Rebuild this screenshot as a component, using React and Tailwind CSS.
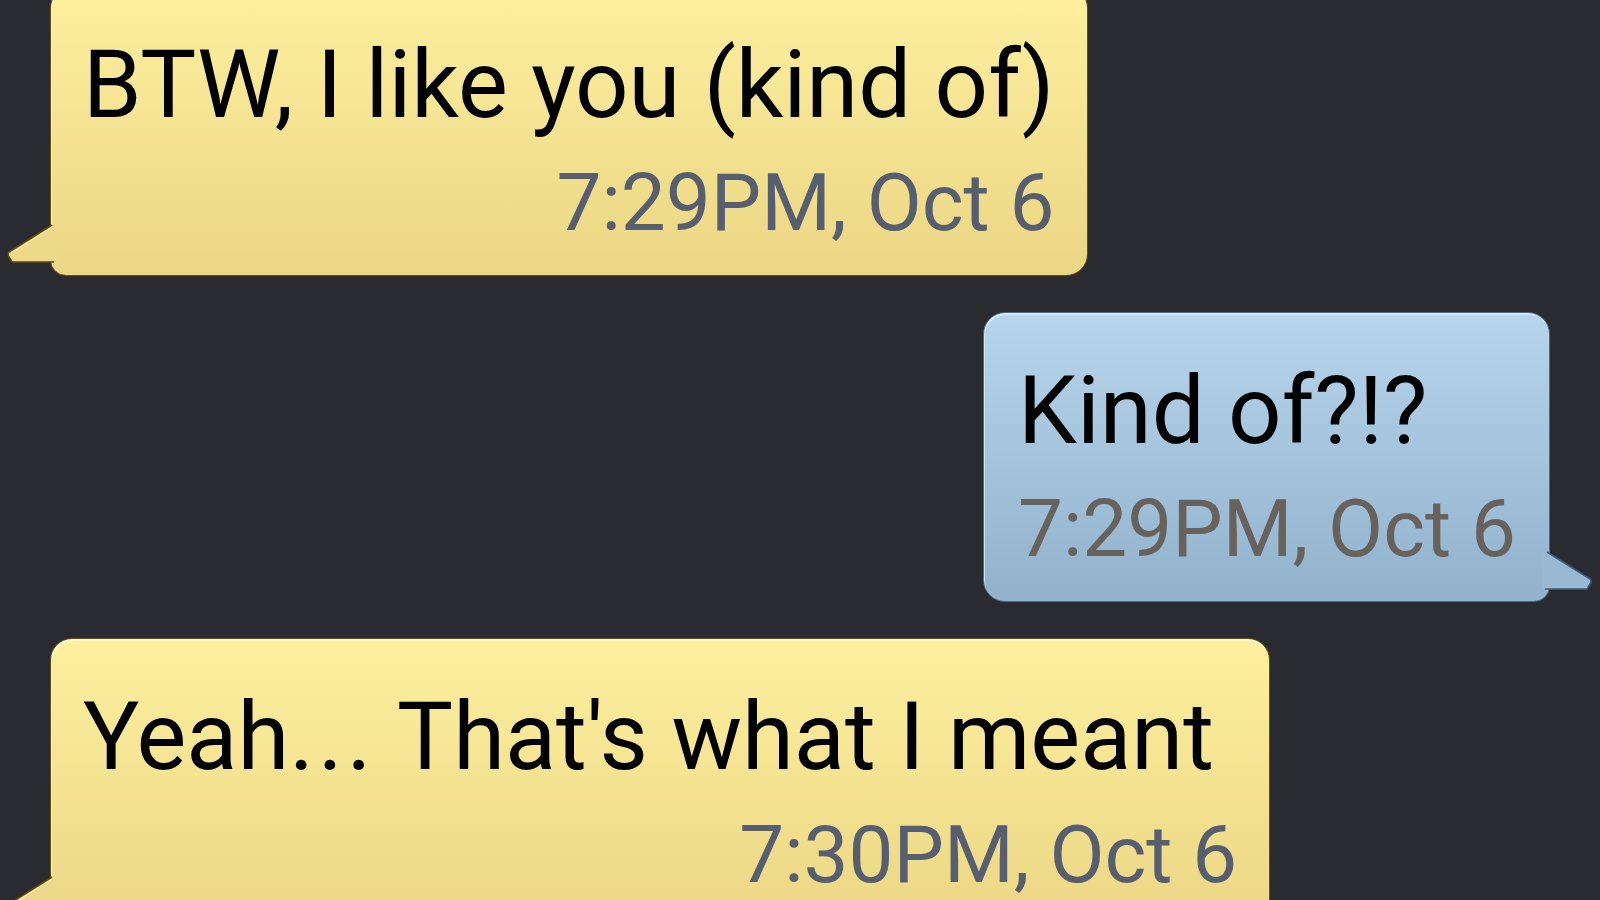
import React from "react";

const messages = [
  { id: 1, mine: false, text: "BTW, I like you (kind of)", time: "7:29PM, Oct 6" },
  { id: 2, mine: true, text: "Kind of?!?", time: "7:29PM, Oct 6" },
  {
    id: 3,
    mine: false,
    text: (
      <>
        Yeah<span className="tracking-[4px]">...</span> That's what I meant{"\u00a0"}
      </>
    ),
    time: "7:30PM, Oct 6",
  },
];

function TailLeft() {
  return (
    <svg className="absolute left-[-44px] bottom-[9px] z-10" width="50" height="44" viewBox="0 0 50 44">
      <path d="M45,3 L2,30 Q0,32 2,35 L5,40 L50,40 L50,3 Z" fill="#edd98a" />
      <path d="M45,3 L2,30 Q0,32 2,35 L5,40 L47,40" fill="none" stroke="#5e4512" strokeWidth="1.6" />
      <path d="M45,5 L6,30" fill="none" stroke="#fff6c8" strokeWidth="1" opacity="0.7" />
    </svg>
  );
}

function TailRight() {
  return (
    <svg className="absolute right-[-43px] bottom-[8px] z-10" width="50" height="44" viewBox="0 0 50 44">
      <path d="M5,3 L48,30 Q50,32 48,35 L45,40 L0,40 L0,3 Z" fill="#99b8d2" />
      <path d="M5,3 L48,30 Q50,32 48,35 L45,40 L3,40" fill="none" stroke="#3f5f7d" strokeWidth="1.6" />
    </svg>
  );
}

function Bubble({ m }) {
  const base = "relative box-border border pt-[51px] pb-[32px] rounded-[22px]";
  const look = m.mine
    ? "self-end mr-[50px] pl-[34px] pr-[33px] rounded-br-[16px] border-[#4a6c8c] bg-gradient-to-b from-[#b7d6ed] to-[#92b2cc] shadow-[inset_1px_2px_0_rgba(220,238,250,0.8)]"
    : "self-start ml-[50px] px-[32px] rounded-bl-[16px] border-[#6a4f14] bg-gradient-to-b from-[#fdf09f] to-[#ebd684] shadow-[inset_1px_2px_0_rgba(255,250,215,0.9)]";
  return (
    <div className={base + " " + look}>
      {m.mine ? <TailRight /> : <TailLeft />}
      <p className="text-[94px] leading-none text-black whitespace-nowrap">{m.text}</p>
      <p
        className={
          "mt-[31px] text-[80px] leading-none text-right whitespace-nowrap " +
          (m.mine ? "text-[#68625c]" : "text-[#575e70]")
        }
      >
        {m.time}
      </p>
    </div>
  );
}

export default function App() {
  return (
    <div
      className="w-[1600px] h-[900px] overflow-hidden bg-[#2a2b30]"
      style={{ fontFamily: "Roboto, 'Noto Sans', sans-serif" }}
    >
      <div className="-mt-[14px] flex flex-col gap-[36px]">
        {messages.map((m) => (
          <Bubble key={m.id} m={m} />
        ))}
      </div>
    </div>
  );
}
